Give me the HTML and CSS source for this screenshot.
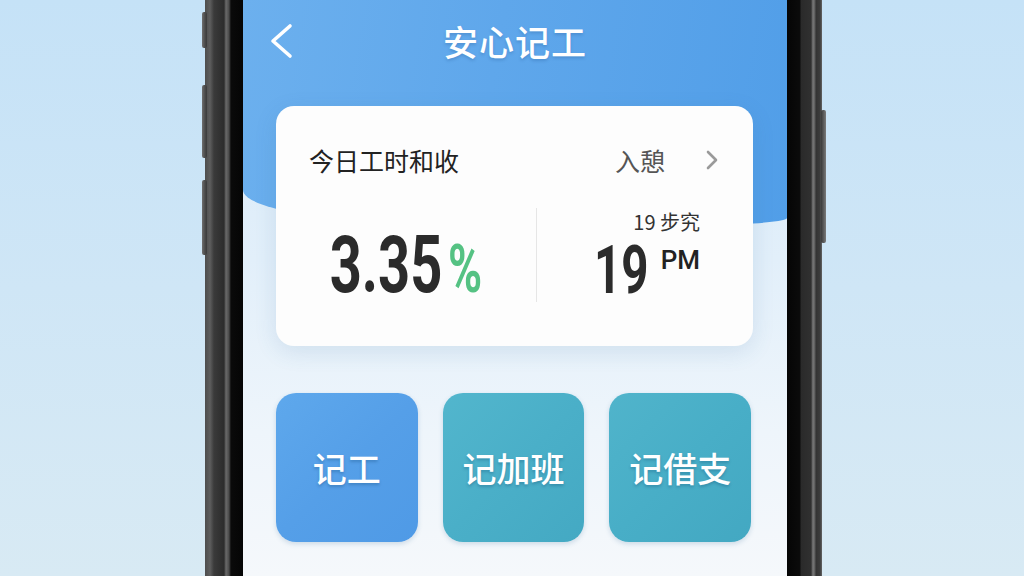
FILE: index.html
```html
<!DOCTYPE html>
<html lang="zh-CN">
<head>
<meta charset="utf-8">
<title>安心记工</title>
<link rel="stylesheet" href="styles.css">
</head>
<body>
<div class="stage">
  <div class="phone">
    <span class="side-btn l1"></span>
    <span class="side-btn l2"></span>
    <span class="side-btn l3"></span>
    <span class="side-btn r1"></span>
    <div class="rim rim-left"></div>
    <div class="screen">
      <header class="topbar">
        <svg class="back" width="24" height="36" viewBox="0 0 24 36"><polyline points="20,3 3,18 20,33" fill="none" stroke="#fff" stroke-width="3.6" stroke-linecap="round" stroke-linejoin="round"/></svg>
        <h1 class="title">安心记工</h1>
        <span class="spacer"></span>
      </header>
      <section class="card">
        <div class="card-head">
          <span class="card-title">今日工时和收</span>
          <span class="card-link">入憩<svg class="chev" width="12" height="20" viewBox="0 0 12 20"><polyline points="2,2 10,10 2,18" fill="none" stroke="#9a9a9a" stroke-width="2.6" stroke-linecap="round" stroke-linejoin="round"/></svg></span>
        </div>
        <div class="card-body">
          <div class="half-left">
            <span class="big">3.35<span class="pct">%</span></span>
          </div>
          <div class="half-right">
            <div class="time-block">
              <div class="sub">19 步究</div>
              <div class="time-row"><span class="big-sm">19</span><span class="pm">PM</span></div>
            </div>
          </div>
        </div>
      </section>
      <nav class="actions">
        <a class="action blue">记工</a>
        <a class="action teal">记加班</a>
        <a class="action teal2">记借支</a>
      </nav>
    </div>
    <div class="rim rim-right"></div>
  </div>
</div>
</body>
</html>
```
FILE: styles.css
```css
* { box-sizing: border-box; margin: 0; padding: 0; }
html, body { width: 1024px; height: 576px; overflow: hidden; }
body {
  background: linear-gradient(180deg, #c5e2f7 0%, #cfe6f6 50%, #d8eaf4 100%);
  font-family: "Noto Sans CJK SC", "Noto Sans", sans-serif;
}
.stage {
  display: flex;
  height: 576px;
  padding-left: 205px;
}
.phone {
  position: relative;
  display: flex;
  height: 576px;
}
.rim-left {
  width: 38px;
  background: linear-gradient(90deg, #4d4d4d 0px, #5e5e5e 5px, #3a3a3a 9px, #2c2c2c 19px, #6a6a6a 21px, #4a4a4a 24px, #0a0a0a 26px, #050505 38px);
}
.rim-right {
  width: 35px;
  background: linear-gradient(90deg, #050505 0px, #0b0b0b 13px, #2a2a2a 14px, #303030 24px, #7a7a7a 26px, #5a5a5a 28px, #333 29px, #3c3c3c 33px, #666 35px);
}
.side-btn {
  position: absolute;
  width: 5px;
  background: linear-gradient(90deg, #6f6f6f, #4a4a4a 60%, #3a3a3a);
  border-radius: 2px;
}
.l1 { left: -3px; top: 12px; height: 36px; }
.l2 { left: -3px; top: 85px; height: 73px; }
.l3 { left: -3px; top: 180px; height: 75px; }
.r1 { right: -4px; top: 110px; height: 133px; background: linear-gradient(90deg, #3a3a3a, #5a5a5a 50%, #7a7a7a); }

.screen {
  position: relative;
  width: 544px;
  height: 576px;
  overflow: hidden;
  background: linear-gradient(180deg, #d6e9f8 0%, #e2effa 45%, #eef5fb 75%, #f5f8fb 100%);
  padding: 0 33px;
}
.screen::before {
  content: "";
  position: absolute;
  left: 0; right: 0; top: 0;
  height: 228px;
  background: linear-gradient(100deg, #6cb0ee 0%, #5fa7eb 45%, #519ee8 100%);
  border-bottom-left-radius: 250px 38px;
  border-bottom-right-radius: 200px 10px;
}
.topbar, .card, .actions { position: relative; z-index: 1; }

.topbar {
  height: 82px;
  display: grid;
  grid-template-columns: 1fr auto 1fr;
  align-items: center;
  margin: 0 -33px;
  padding: 0 27px;
}
.back { display: block; }
.title {
  font-size: 35px;
  font-weight: 500;
  color: #fff;
  line-height: 40px;
  letter-spacing: 1px;
  text-shadow: 0 2px 3px rgba(30, 80, 140, 0.25);
}

.card {
  margin-top: 24px;
  width: 477px;
  height: 240px;
  padding-top: 40px;
  background: #fdfdfd;
  border-radius: 18px;
  box-shadow: 0 6px 22px rgba(60, 110, 160, 0.14);
}
.card-head {
  display: flex;
  justify-content: space-between;
  align-items: center;
  height: 28px;
  margin: 0 35px 0 33px;
}
.card-title {
  font-size: 25px;
  line-height: 28px;
  color: #222;
}
.card-link {
  display: flex;
  align-items: center;
  gap: 41px;
  font-size: 25px;
  line-height: 28px;
  color: #555;
}
.chev { display: block; }

.card-body {
  display: flex;
  margin-top: 34px;
  height: 94px;
}
.half-left {
  flex: 0 0 260px;
  padding-top: 17px;
  text-align: center;
}
.big {
  display: inline-block;
  font-family: Roboto, "Liberation Sans", sans-serif;
  font-weight: 700;
  font-size: 80px;
  line-height: 80px;
  color: #2b2b2b;
  transform: scaleX(0.7);
  transform-origin: center;
  white-space: nowrap;
}
.pct {
  font-size: 66px;
  color: #55c283;
  margin-left: 8px;
}
.half-right {
  flex: 1;
  border-left: 1px solid #e6e6e6;
  display: flex;
  justify-content: center;
}
.time-block {
  padding-top: 2px;
  padding-left: 4px;
}
.sub {
  text-align: right;
  font-size: 20px;
  line-height: 24px;
  color: #333;
}
.time-row {
  display: flex;
  align-items: flex-start;
  margin-top: 4px;
}
.big-sm {
  display: inline-block;
  font-family: Roboto, "Liberation Sans", sans-serif;
  font-weight: 700;
  font-size: 66px;
  line-height: 66px;
  color: #2b2b2b;
  transform: scaleX(0.72);
  transform-origin: left center;
  margin-right: -21px;
}
.pm {
  font-family: Roboto, "Liberation Sans", sans-serif;
  font-weight: 500;
  font-size: 26px;
  line-height: 26px;
  color: #222;
  margin-top: 9px;
  margin-left: 12px;
}

.actions {
  display: grid;
  grid-template-columns: repeat(3, 1fr);
  gap: 25px;
  width: 475px;
  margin-top: 47px;
}
.action {
  height: 149px;
  border-radius: 20px;
  display: flex;
  align-items: center;
  justify-content: center;
  color: #fff;
  font-size: 34px;
  font-weight: 500;
  text-shadow: 0 2px 3px rgba(0, 50, 90, 0.25);
  box-shadow: 0 2px 5px rgba(30, 90, 140, 0.18);
}
.blue { background: linear-gradient(135deg, #5ea8ec 0%, #559fe8 50%, #4f9ae6 100%); }
.teal { background: linear-gradient(135deg, #52b6cd 0%, #4aafc8 50%, #44a9c3 100%); }
.teal2 { background: linear-gradient(135deg, #50b4cb 0%, #48aec7 50%, #43a8c2 100%); }
```
